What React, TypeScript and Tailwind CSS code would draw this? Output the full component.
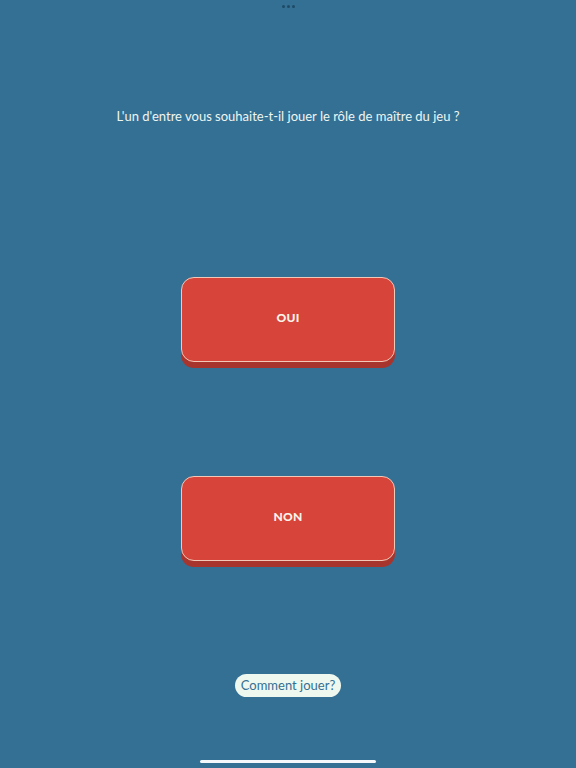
export default function App() {
  return (
    <div
      className="relative flex h-[768px] w-full flex-col items-center overflow-hidden bg-[#346f94]"
      style={{ fontFamily: '"Lato", "Open Sans", sans-serif' }}
    >
      {/* top dots */}
      <div className="mt-[5px] flex gap-[2px]">
        <span className="h-[3px] w-[3px] rounded-full bg-[#1f4a66]" />
        <span className="h-[3px] w-[3px] rounded-full bg-[#1f4a66]" />
        <span className="h-[3px] w-[3px] rounded-full bg-[#1f4a66]" />
      </div>

      <p className="mt-[98px] text-[13px] leading-5 text-[#eef6f2]">
        L'un d'entre vous souhaite-t-il jouer le rôle de maître du jeu ?
      </p>

      <button className="mt-[151px] flex h-[85px] w-[214px] items-center justify-center rounded-[13px] border border-[#f2c9b8] bg-[#d6443a] pb-[3px] text-[12px] font-black tracking-wide text-[#fbf3ea] shadow-[0_6px_0_#a8352d]">
        OUI
      </button>

      <button className="mt-[114px] flex h-[85px] w-[214px] items-center justify-center rounded-[13px] border border-[#f2c9b8] bg-[#d6443a] pb-[3px] text-[12px] font-black tracking-wide text-[#fbf3ea] shadow-[0_6px_0_#a8352d]">
        NON
      </button>

      <button className="mt-[113px] rounded-full bg-[#eef8ef] px-[6px] py-[2px] text-[13px] leading-[19px] text-[#346f94]">
        Comment jouer?
      </button>

      <div className="absolute bottom-[5px] left-1/2 h-[3px] w-[176px] -translate-x-1/2 rounded-full bg-[#f4f8fa]" />
    </div>
  );
}
